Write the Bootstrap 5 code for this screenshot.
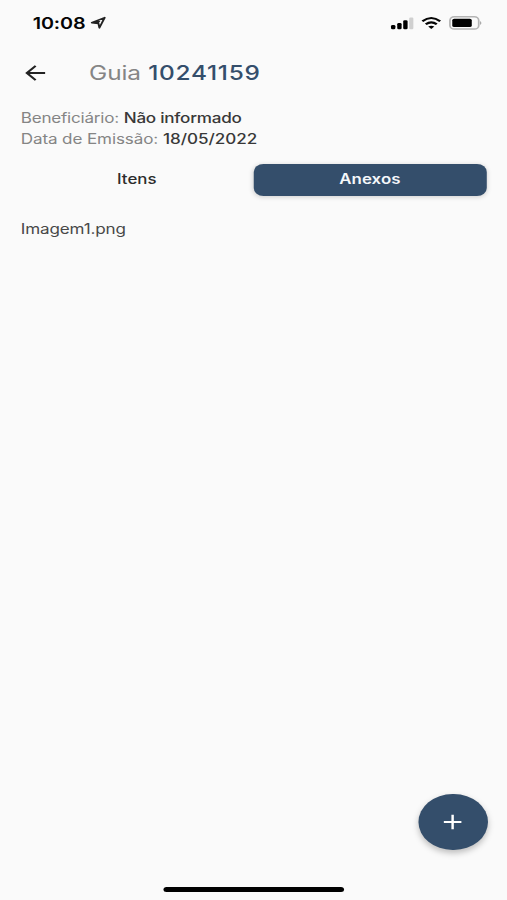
<!DOCTYPE html>
<html lang="pt-BR">
<head>
<meta charset="utf-8">
<meta name="viewport" content="width=device-width, initial-scale=1">
<title>Guia 10241159</title>
<link href="https://cdn.jsdelivr.net/npm/bootstrap@5.3.0/dist/css/bootstrap.min.css" rel="stylesheet">
<style>
  html, body { height: 900px; overflow: hidden; background: #fafafa; }
  body { font-family: Inter, "Open Sans", sans-serif; color: #333; }
  /* The whole screen is drawn on a narrower canvas and widened */
  .screen { width: 415.57px; height: 900px; transform: scaleX(1.22); transform-origin: 0 0; }
  .status-bar { height: 46px; padding: 0 20px 0 26.8px; color: #050505; }
  .clock { font-size: 16.2px; font-weight: 600; line-height: 1; letter-spacing: -.1px; padding-top: 1px; }
  .status-icons { gap: 6px; }
  .title-bar { height: 54px; padding-left: 19px; }
  .title-bar h1 { font-size: 20px; line-height: 1; font-weight: 400; color: #858585; margin-left: 34px; letter-spacing: -.1px; }
  .title-bar strong { font-weight: 500; color: #344e6b; margin-left: .5px; letter-spacing: .6px; }
  .details { padding: 7px 17px 0; font-size: 14px; line-height: 21px; color: #858585; letter-spacing: -.19px; }
  .details dt { font-weight: 400; }
  .details dd { color: #383838; font-weight: 500; letter-spacing: -.2px; }
  .details .issued { letter-spacing: -.1px; }
  .details .issued dd { letter-spacing: -.03px; }
  .tabs { padding: 15px 16.3px 0 17px; }
  .tabs .nav-link { height: 32px; padding: 0 1px 2px 0; line-height: 30px; font-size: 13.8px; font-weight: 500; color: #2c2c2c; border-radius: 8px; }
  .tabs .nav-link.active { background: #344e6b; color: #f4f7fa; font-weight: 600; letter-spacing: .05px; box-shadow: 0 1px 5px rgba(0,0,0,.18); }
  .file { padding: 0 17px; margin-top: 22px; font-size: 14px; line-height: 21px; color: #484848; letter-spacing: -.12px; }
  .fab { width: 56.5px; height: 56.5px; background: #344e6b; box-shadow: 0 3px 6px rgba(0,0,0,.25); margin: 0 16px 37px auto; }
  .home-bar { width: 148px; height: 5px; background: #000; margin: 0 auto 8px 134px; }
</style>
</head>
<body>
<div class="screen d-flex flex-column">
  <header class="status-bar d-flex align-items-center justify-content-between">
    <div class="d-flex align-items-center">
      <span class="clock">10:08</span>
      <svg class="ms-1" width="14" height="15" viewBox="0 0 14 15" fill="none" stroke="#222" stroke-width="1.6" stroke-linejoin="round"><path d="M1.2 7.7 11.8 2.6 7.5 12.8 6.7 8.5Z"/><path d="M1.2 7.7 6.7 8.5 8.3 6 4.6 6Z" fill="#222" stroke="none"/></svg>
    </div>
    <div class="status-icons d-flex align-items-center">
      <svg width="19" height="14" viewBox="0 0 19 14"><rect x="0.5" y="9" width="3.6" height="4.2" rx="1.3"/><rect x="5.6" y="7" width="3.6" height="6.2" rx="1.2"/><rect x="10.5" y="4.3" width="3.6" height="8.9" rx="1.2"/><rect x="15.4" y="1.6" width="3.6" height="11.6" rx="1.2" fill="#d0d0d0"/></svg>
      <svg width="17" height="14" viewBox="0 0 17 14" fill="none" stroke="#050505" stroke-width="2.1"><path d="M1.2 5.2Q8.5-1.2 15.8 5.2M4 8.3Q8.5 4.4 13 8.3"/><path d="M6 10.6Q8.5 8.8 11 10.6L8.5 13.1Z" fill="#050505" stroke="none"/></svg>
      <svg width="28" height="14" viewBox="0 0 28 14"><rect x=".8" y=".8" width="23.6" height="12.2" rx="3.6" fill="none" stroke="#b4b4b4" stroke-width="1.4"/><rect x="2.7" y="2.7" width="16" height="8.4" rx="1.6"/><path d="M25.6 4.9Q27.5 6.9 25.6 8.9Z" fill="#999"/></svg>
    </div>
  </header>

  <div class="title-bar d-flex align-items-center">
    <svg width="20" height="20" viewBox="0 0 20 20" fill="none" stroke="#222" stroke-width="1.9"><path d="M18 10H3.4M10.2 2.8 3 10l7.2 7.2"/></svg>
    <h1 class="mb-0">Guia <strong>10241159</strong></h1>
  </div>

  <dl class="details mb-0">
    <div class="d-flex gap-1"><dt>Beneficiário:</dt><dd class="mb-0">Não informado</dd></div>
    <div class="issued d-flex gap-1"><dt>Data de Emissão:</dt><dd class="mb-0">18/05/2022</dd></div>
  </dl>

  <nav class="tabs nav nav-pills nav-fill flex-nowrap">
    <a class="nav-link w-50" href="#">Itens</a>
    <a class="nav-link active w-50" href="#">Anexos</a>
  </nav>

  <div class="file">Imagem1.png</div>

  <button class="fab btn rounded-circle border-0 p-0 mt-auto d-flex align-items-center justify-content-center" aria-label="Adicionar">
    <svg width="16" height="16" viewBox="0 0 16 16" stroke="#fff" stroke-width="2"><path d="M8 .8v14.4M.8 8h14.4"/></svg>
  </button>
  <div class="home-bar rounded-pill"></div>
</div>
<script src="https://cdn.jsdelivr.net/npm/bootstrap@5.3.0/dist/js/bootstrap.bundle.min.js"></script>
</body>
</html>
